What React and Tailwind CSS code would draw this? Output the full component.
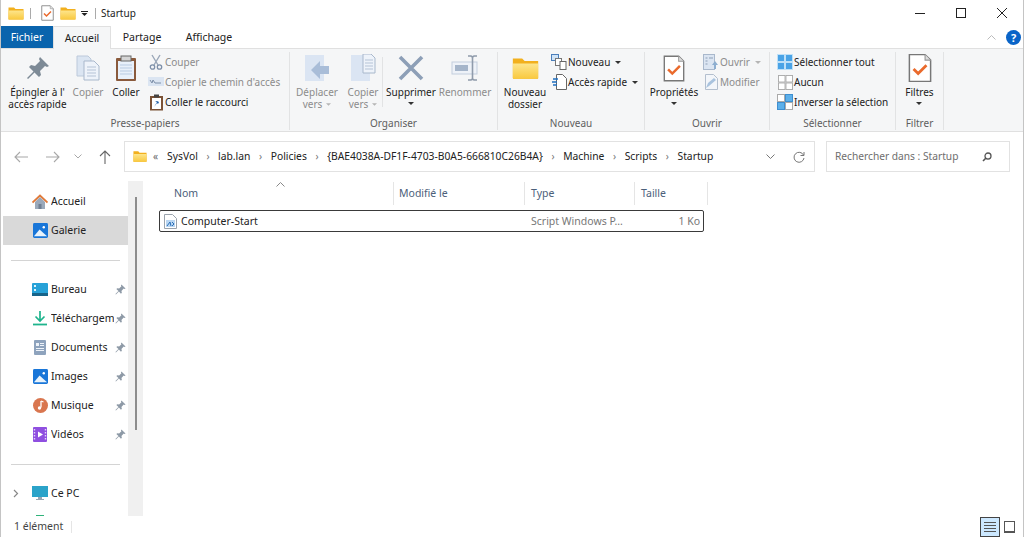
import React from 'react';

const Folder = ({ s = 16 }) => (
  <svg width={s} height={s * 0.875} viewBox="0 0 32 28">
    <defs>
      <linearGradient id="fg" x1="0" y1="0" x2="0" y2="1">
        <stop offset="0" stopColor="#fde58c" />
        <stop offset="1" stopColor="#f9c93f" />
      </linearGradient>
    </defs>
    <path d="M1 3h11l3 3h16v20a1 1 0 0 1-1 1H2a1 1 0 0 1-1-1z" fill="#f2b01e" />
    <path d="M1 9h30v17a1 1 0 0 1-1 1H2a1 1 0 0 1-1-1z" fill="url(#fg)" />
  </svg>
);

const CheckDoc = ({ w = 13, h = 16 }) => (
  <svg width={w} height={h} viewBox="0 0 26 32">
    <path d="M1.500 1.500h17l6 6v23h-23z" fill="#fff" stroke="#777" strokeWidth="1.600" />
    <path d="M18.500 1.500v6h6" fill="#ddd" stroke="#999" strokeWidth="1.200" />
    <path d="M6 17l5 5 9-9" fill="none" stroke="#ea6a2c" strokeWidth="3" />
  </svg>
);

const Pin = ({ s = 24, c = '#7d8a96' }) => (
  <svg width={s} height={s} viewBox="0 0 24 24">
    <path d="M14 1l9 9-2 1-2-1-5 5 1 4-2 2-4.500-4.500L2 23l-1-1 6.500-6.500L3 11l2-2 4 1 5-5-1-2z" fill={c} />
  </svg>
);

const CopyIcon = () => (
  <svg width="24" height="26" viewBox="0 0 24 26">
    <path d="M1 1h11l3 3v17H1z" fill="#dbe5f2" stroke="#bcc9da" />
    <path d="M8 6h10l5 5v14H8z" fill="#eef3fa" stroke="#a9b8cc" />
    <path d="M11 12h9M11 15h9M11 18h9M11 21h9" stroke="#b5c3d6" />
  </svg>
);

const Paste = () => (
  <svg width="22" height="27" viewBox="0 0 22 27">
    <rect x="1" y="3" width="20" height="23" rx="1" fill="#8a5a3c" />
    <rect x="3" y="6" width="16" height="18" fill="#e8f0fa" />
    <path d="M5 10h12M5 13h12M5 16h12M5 19h12" stroke="#b9cbe2" />
    <rect x="6" y="1" width="10" height="5" fill="#d5d5d5" stroke="#666" />
  </svg>
);

const MoveTo = ({ copy }) => (
  <svg width="26" height="28" viewBox="0 0 26 28">
    <rect x="1" y="1" width="19" height="26" fill="#dbe5f3" />
    {copy ? (
      <g>
        <path d="M13 0h8l4 4v15H13z" fill="#eef3fa" stroke="#a9b8cc" />
        <path d="M15 6h8M15 9h8M15 12h8M15 15h8" stroke="#b5c3d6" />
      </g>
    ) : (
      <path d="M25 12v8h-9v5l-9-9 9-9v5z" fill="#a9bdd8" />
    )}
  </svg>
);

const Delete = () => (
  <svg width="26" height="26" viewBox="0 0 26 26">
    <path d="M2 2l22 22M24 2L2 24" stroke="#8d9fb7" strokeWidth="3.600" />
  </svg>
);

const Rename = () => (
  <svg width="28" height="26" viewBox="0 0 28 26">
    <rect x="1" y="7" width="25" height="12" fill="#eef2f8" stroke="#c3cede" />
    <rect x="4" y="10" width="13" height="6" fill="#a5b5ca" />
    <path d="M17 1h3l1.500 1L23 1h3M21.500 2v22M17 25h3l1.500-1 1.500 1h3" fill="none" stroke="#8f9bab" strokeWidth="1.600" />
  </svg>
);

const NewItem = () => (
  <svg width="16" height="16" viewBox="0 0 16 16">
    <rect x="0.500" y="0.500" width="7" height="6" fill="#cfe3f6" stroke="#4a7ebb" />
    <rect x="4.500" y="4.500" width="6" height="7" fill="#fff" stroke="#777" />
    <rect x="9" y="7.500" width="6" height="8" fill="#fff" stroke="#666" />
  </svg>
);

const QuickAccess = () => (
  <svg width="15" height="16" viewBox="0 0 15 16">
    <path d="M4.500 0.500h6l4 4v11h-10z" fill="#fff" stroke="#666" />
    <path d="M1 5h5M0 8h5M1 11h4" stroke="#1f6fc0" strokeWidth="1.300" />
  </svg>
);

const Scissors = () => (
  <svg width="16" height="16" viewBox="0 0 16 16">
    <path d="M4 1l6 10M12 1L6 11" stroke="#9aa7b8" strokeWidth="1.400" />
    <circle cx="4.500" cy="13" r="2.200" fill="none" stroke="#7d8fa8" strokeWidth="1.300" />
    <circle cx="11.500" cy="13" r="2.200" fill="none" stroke="#7d8fa8" strokeWidth="1.300" />
  </svg>
);

const CopyPath = () => (
  <svg width="16" height="16" viewBox="0 0 16 16">
    <rect x="0" y="3" width="16" height="9" fill="#dbe5f2" />
    <path d="M2 6l2 3 1-3 2 3h6" fill="none" stroke="#7d8fa8" />
  </svg>
);

const PasteLink = () => (
  <svg width="15" height="17" viewBox="0 0 15 17">
    <rect x="1" y="2" width="13" height="14.500" fill="#7b5236" />
    <rect x="3" y="4" width="9" height="11" fill="#fff" />
    <rect x="5" y="0.500" width="5" height="3" fill="#444" />
    <path d="M5 13l3-5h-2l2-1 2 1-1 2-1-1z" fill="#1f5fa8" />
  </svg>
);

const OpenIcon = () => (
  <svg width="16" height="16" viewBox="0 0 16 16">
    <rect x="0.500" y="0.500" width="11" height="15" fill="#dbe5f2" stroke="#a9b8cc" />
    <path d="M2.500 4h2M2.500 7h2M2.500 10h2M6 4h4" stroke="#8d9fb7" />
    <path d="M12 7l3 4h-2v4h-2v-4H9z" fill="#8daed0" />
  </svg>
);

const EditIcon = () => (
  <svg width="16" height="16" viewBox="0 0 16 16">
    <path d="M2.500 0.500h8l4 4v11h-12z" fill="#f3f6fa" stroke="#b3bfce" />
    <path d="M3 14l2-5 6-5 2 2-7 6z" fill="#a9c3de" />
  </svg>
);

const Grid4 = ({ fills, stroke, s = 15 }) => (
  <svg width={s} height={s} viewBox="0 0 16 16">
    {[[0.500, 0.500], [8.500, 0.500], [0.500, 8.500], [8.500, 8.500]].map(([x, y], i) => (
      <rect key={i} x={x} y={y} width="7" height="7" fill={fills[i]} stroke={stroke[i]} />
    ))}
  </svg>
);

const Chev = ({ c = '#555', w = 6 }) => (
  <svg width={w} height={3} viewBox="0 0 6 3"><path d="M0 0h6L3 3z" fill={c} /></svg>
);

const BigBtn = ({ w, icon, lines, dis, arrow, arrowDis }) => (
  <div className={`flex flex-col items-center ${w}`}>
    <div className="flex h-[30px] items-center justify-center pt-[2px]">{icon}</div>
    <div className={`mt-[4px] flex flex-col items-center whitespace-nowrap text-[10px] leading-[12px] ${dis ? 'text-[#8c8c8c]' : 'text-[#222]'}`}>
      {lines.map((l, i) => (
        <span key={i} className="flex items-center gap-1">
          {l}
          {arrowDis && i === lines.length - 1 ? <Chev c="#b5b5b5" w={5} /> : null}
        </span>
      ))}
      {arrow ? <span className="mt-[4px] flex h-[8px] items-start"><Chev c="#333" /></span> : null}
    </div>
  </div>
);

const SmallBtn = ({ icon, label, dis, chev, chevDis, tw = 'w-4' }) => (
  <div className={`flex h-5 items-center gap-[1px] whitespace-nowrap text-[10px] ${dis ? 'text-[#8c8c8c]' : 'text-[#222]'}`}>
    <span className={`flex justify-center ${tw}`}>{icon}</span>
    <span>{label}</span>
    {chev ? <span className="ml-1"><Chev c="#333" /></span> : null}
    {chevDis ? <span className="ml-1"><Chev c="#b5b5b5" /></span> : null}
  </div>
);

const Group = ({ w, label, children }) => (
  <div className={`mb-[1px] mt-[3px] flex flex-col border-r border-[#e2e3e4] ${w}`}>
    <div className="flex h-[63px] flex-1 items-start">{children}</div>
    <div className="h-[14px] text-center text-[10px] leading-[14px] text-[#5e5e5e]">{label}</div>
  </div>
);

const Sep = () => <span className="text-[10px] text-[#777]">›</span>;

const Home = () => (
  <svg width="16" height="16" viewBox="0 0 16 16">
    <path d="M3 8v7h10V8L8 3z" fill="#9aa9bb" />
    <rect x="6.500" y="10" width="3" height="5" fill="#6f7f92" />
    <path d="M0.500 8.500L8 1.500l7.500 7" fill="none" stroke="#e07a3a" strokeWidth="1.800" />
  </svg>
);
const Gallery = ({ s = 15 }) => (
  <svg width={s} height={s} viewBox="0 0 16 16">
    <rect width="16" height="16" rx="1.500" fill="#1976d8" />
    <circle cx="11.500" cy="4.500" r="1.300" fill="#fff" />
    <path d="M1 14l6-7 8 7z" fill="#e8f3fc" />
  </svg>
);
const Desktop = () => (
  <svg width="16" height="13" viewBox="0 0 16 13">
    <rect width="16" height="12" rx="1" fill="#27a2d8" />
    <rect y="10" width="16" height="3" fill="#17648a" />
    <rect x="2" y="2" width="2" height="2" fill="#dff3fb" />
    <rect x="2" y="6" width="2" height="2" fill="#dff3fb" />
  </svg>
);
const Download = () => (
  <svg width="14" height="15" viewBox="0 0 14 15">
    <path d="M7 0v9M2.500 5.500L7 10l4.500-4.500" fill="none" stroke="#1fb48d" strokeWidth="1.700" />
    <path d="M0 13.500h14" stroke="#1fb48d" strokeWidth="1.800" />
  </svg>
);
const Docs = () => (
  <svg width="12" height="15" viewBox="0 0 12 15">
    <rect width="12" height="15" rx="1" fill="#8ea3bd" />
    <rect x="2" y="3" width="3" height="3" fill="#eef3f9" />
    <path d="M6 3.500h4M6 5.500h4M2 8.500h8M2 10.500h8" stroke="#eef3f9" />
  </svg>
);
const Music = () => (
  <svg width="15" height="15" viewBox="0 0 15 15">
    <circle cx="7.500" cy="7.500" r="7.500" fill="#d9764f" />
    <path d="M8 3v6.500" stroke="#fff" strokeWidth="1.300" />
    <circle cx="6.500" cy="10" r="1.700" fill="#fff" />
    <path d="M8 3l2.500 1" stroke="#fff" strokeWidth="1.300" />
  </svg>
);
const Video = () => (
  <svg width="14" height="15" viewBox="0 0 14 15">
    <rect width="14" height="15" rx="1" fill="#8f4fe0" />
    <path d="M5 4.500l5 3-5 3z" fill="#fff" />
    <path d="M1.500 2v11M12.500 2v11" stroke="#e4d3fa" strokeWidth="1.400" strokeDasharray="1.500 1.500" />
  </svg>
);
const Pc = () => (
  <svg width="16" height="16" viewBox="0 0 16 16">
    <rect width="16" height="11" fill="#2ba3c9" />
    <path d="M6 11h4v2h2v1H4v-1h2z" fill="#98a6b3" />
  </svg>
);
const Network = () => (
  <svg width="16" height="16" viewBox="0 0 16 16"><rect x="4" width="8" height="16" fill="#2fb37a" /></svg>
);
const ScriptFile = () => (
  <svg width="13" height="15" viewBox="0 0 13 15">
    <path d="M0.500 0.500h8l4 4v10h-12z" fill="#fff" stroke="#9aa3ad" />
    <rect x="2" y="6" width="9" height="7" fill="#b9d6f2" />
    <path d="M3 12l3-4 1 4M8 8l2 2-2 2" fill="none" stroke="#2a6fb8" />
  </svg>
);

const NavItem = ({ icon, label, pin, sel }) => (
  <div className={`flex h-[29px] shrink-0 items-center pl-[29px] text-[10.500px] text-[#222] ${sel ? 'bg-[#d9d9d9]' : ''}`}>
    <span className="flex w-4 justify-center">{icon}</span>
    <span className="ml-[3px] w-[63px] overflow-hidden whitespace-nowrap">{label}</span>
    {pin ? <span className="ml-[1px]"><Pin s={11} c="#8d99a6" /></span> : null}
  </div>
);

const Crumb = ({ children }) => <span className="whitespace-nowrap">{children}</span>;

export default function App() {
  return (
    <div className="flex h-[537px] w-[1024px] flex-col overflow-hidden border-l border-r border-[#c4c4c4] bg-white text-[#222]" style={{ fontFamily: '"Noto Sans", sans-serif' }}>
      {/* Title bar */}
      <div className="flex h-[26px] shrink-0 items-center pl-[7px]">
        <Folder />
        <span className="ml-[6px] h-[11px] w-px bg-[#aaa]" />
        <span className="ml-[10px]"><CheckDoc /></span>
        <span className="ml-[6px]"><Folder /></span>
        <span className="ml-[5px] flex flex-col items-center gap-[1px]">
          <span className="h-px w-[7px] bg-[#222]" />
          <Chev c="#222" w={7} />
        </span>
        <span className="ml-[7px] h-[11px] w-px bg-[#aaa]" />
        <span className="ml-[5px] text-[10px]">Startup</span>
        <div className="ml-auto flex items-center pr-[16px]">
          <span className="h-px w-[10px] bg-[#222]" />
          <span className="ml-[31px] h-[10px] w-[10px] border border-[#222]" />
          <svg className="ml-[31px]" width="10" height="10" viewBox="0 0 10 10">
            <path d="M0 0l10 10M10 0L0 10" stroke="#222" />
          </svg>
        </div>
      </div>

      {/* Tabs */}
      <div className="relative z-10 flex h-[22px] shrink-0 items-stretch text-[10.500px]">
        <div className="flex w-[52px] items-center justify-center bg-[#0a64ad] pt-px text-white">Fichier</div>
        <div className="-mb-px flex w-[58px] items-center justify-center border-l border-r border-t border-[#e0e0e0] bg-[#f5f6f7] pt-px">Accueil</div>
        <div className="flex w-[62px] items-center justify-center pt-px">Partage</div>
        <div className="flex w-[72px] items-center justify-center pt-px">Affichage</div>
        <div className="ml-auto flex items-center gap-[10px] pr-[2px]">
          <svg width="9" height="5" viewBox="0 0 9 5"><path d="M0.500 4.500l4-4 4 4" fill="none" stroke="#bbb" /></svg>
          <span className="flex h-[15px] w-[15px] items-center justify-center rounded-full bg-[#0a64c8] text-[11px] font-bold leading-none text-white">?</span>
        </div>
      </div>

      {/* Ribbon */}
      <div className="flex h-[84px] shrink-0 border-b border-t border-[#e0e0e0] bg-[#f5f6f7]">
        <Group w="w-[289px]" label="Presse-papiers">
          <div className="flex pl-[5px]">
            <BigBtn w="w-[63px]" icon={<Pin />} lines={["Épingler à l'", 'accès rapide']} />
            <BigBtn w="w-[38px]" dis icon={<CopyIcon />} lines={['Copier']} />
            <BigBtn w="w-[38px]" icon={<Paste />} lines={['Coller']} />
            <div className="ml-[3px] flex flex-col">
              <SmallBtn dis icon={<Scissors />} label="Couper" />
              <SmallBtn dis icon={<CopyPath />} label="Copier le chemin d'accès" />
              <SmallBtn icon={<PasteLink />} label="Coller le raccourci" />
            </div>
          </div>
        </Group>
        <Group w="w-[208px]" label="Organiser">
          <BigBtn w="w-[54px]" dis arrowDis icon={<MoveTo />} lines={['Déplacer', 'vers']} />
          <BigBtn w="w-[38px]" dis arrowDis icon={<MoveTo copy />} lines={['Copier', 'vers']} />
          <span className="mt-[5px] h-[50px] w-px bg-[#e2e3e4]" />
          <BigBtn w="w-[56px]" arrow icon={<Delete />} lines={['Supprimer']} />
          <BigBtn w="w-[52px]" dis icon={<Rename />} lines={['Renommer']} />
        </Group>
        <Group w="w-[147px]" label="Nouveau">
          <div className="flex pl-[3px]">
            <BigBtn w="w-[48px]" icon={<Folder s={27} />} lines={['Nouveau', 'dossier']} />
            <div className="ml-[2px] flex flex-col">
              <SmallBtn icon={<NewItem />} label="Nouveau" chev />
              <SmallBtn icon={<QuickAccess />} label="Accès rapide" chev />
            </div>
          </div>
        </Group>
        <Group w="w-[125px]" label="Ouvrir">
          <div className="flex pl-[4px]">
            <BigBtn w="w-[50px]" arrow icon={<CheckDoc w={22} h={27} />} lines={['Propriétés']} />
            <div className="ml-[4px] flex flex-col">
              <SmallBtn dis icon={<OpenIcon />} label="Ouvrir" chevDis />
              <SmallBtn dis icon={<EditIcon />} label="Modifier" />
            </div>
          </div>
        </Group>
        <Group w="w-[126px]" label="Sélectionner">
          <div className="flex flex-col pl-[7px]">
            <SmallBtn icon={<Grid4 s={16} fills={['#4aa3e6', '#4aa3e6', '#4aa3e6', '#4aa3e6']} stroke={['#bfe0f7', '#bfe0f7', '#bfe0f7', '#bfe0f7']} />} label="Sélectionner tout" />
            <SmallBtn icon={<Grid4 s={15} fills={['#fff', '#fff', '#fff', '#fff']} stroke={['#aaa', '#aaa', '#aaa', '#aaa']} />} label="Aucun" />
            <SmallBtn icon={<Grid4 s={16} fills={['#fff', '#5db0ea', '#5db0ea', '#fff']} stroke={['#aaa', '#3f8fd0', '#3f8fd0', '#aaa']} />} label="Inverser la sélection" />
          </div>
        </Group>
        <Group w="w-[48px]" label="Filtrer">
          <BigBtn w="w-[47px]" arrow icon={<CheckDoc w={24} h={30} />} lines={['Filtres']} />
        </Group>
      </div>

      {/* Address row */}
      <div className="flex h-[49px] shrink-0 items-center pl-[13px]">
        <svg width="14" height="12" viewBox="0 0 14 12"><path d="M6 1L1 6l5 5M1 6h13" fill="none" stroke="#a8a8a8" strokeWidth="1.100" /></svg>
        <svg className="ml-[18px]" width="14" height="12" viewBox="0 0 14 12"><path d="M8 1l5 5-5 5M13 6H0" fill="none" stroke="#a8a8a8" strokeWidth="1.100" /></svg>
        <svg className="ml-[14px]" width="8" height="5" viewBox="0 0 8 5"><path d="M0.500 0.500L4 4l3.500-3.500" fill="none" stroke="#a8a8a8" /></svg>
        <svg className="ml-[17px]" width="12" height="14" viewBox="0 0 12 14"><path d="M1 6l5-5 5 5M6 1v13" fill="none" stroke="#666" strokeWidth="1.100" /></svg>
        <div className="ml-[13px] flex h-[31px] w-[691px] items-center border border-[#e2e2e2] pl-2 pr-[9px] text-[10.300px]">
          <Folder s={14} />
          <span className="ml-[6px] text-[10px] text-[#666]">«</span>
          <div className="ml-[9px] flex items-center gap-[8.600px]">
            <Crumb>SysVol</Crumb><Sep />
            <Crumb>lab.lan</Crumb><Sep />
            <Crumb>Policies</Crumb><Sep />
            <Crumb>{'{BAE4038A-DF1F-4703-B0A5-666810C26B4A}'}</Crumb><Sep />
            <Crumb>Machine</Crumb><Sep />
            <Crumb>Scripts</Crumb><Sep />
            <Crumb>Startup</Crumb>
          </div>
          <svg className="ml-auto" width="9" height="5" viewBox="0 0 9 5"><path d="M0.500 0.500l4 4 4-4" fill="none" stroke="#777" /></svg>
          <svg className="ml-[18px]" width="12" height="12" viewBox="0 0 12 12"><path d="M10.500 4A5 5 0 1 0 11 7M11 1v3.500H7.500" fill="none" stroke="#777" /></svg>
        </div>
        <div className="ml-[11px] flex h-[31px] w-[184px] items-center justify-between border border-[#e2e2e2] pl-2 pr-[17px] text-[10.200px] text-[#6e6e6e]">
          <span>Rechercher dans : Startup</span>
          <svg width="10" height="10" viewBox="0 0 10 10"><circle cx="6" cy="4" r="3" fill="none" stroke="#555" strokeWidth="1.300" /><path d="M4 6L1 9" stroke="#555" strokeWidth="1.600" /></svg>
        </div>
      </div>

      {/* Body */}
      <div className="flex min-h-0 flex-1">
        <div className="flex w-[127px] shrink-0 flex-col overflow-hidden pl-[2px] pt-[6px]">
          <NavItem icon={<Home />} label="Accueil" />
          <NavItem icon={<Gallery />} label="Galerie" sel />
          <div className="mx-2 mb-[14px] mt-[15px] h-px shrink-0 bg-[#d4d4d4]" />
          <NavItem icon={<Desktop />} label="Bureau" pin />
          <NavItem icon={<Download />} label="Téléchargements" pin />
          <NavItem icon={<Docs />} label="Documents" pin />
          <NavItem icon={<Gallery />} label="Images" pin />
          <NavItem icon={<Music />} label="Musique" pin />
          <NavItem icon={<Video />} label="Vidéos" pin />
          <div className="mx-2 mb-[14px] mt-[15px] h-px shrink-0 bg-[#d4d4d4]" />
          <div className="relative shrink-0">
            <svg className="absolute left-[10px] top-[10px]" width="6" height="9" viewBox="0 0 6 9"><path d="M1 1l3.500 3.500L1 8" fill="none" stroke="#888" strokeWidth="1.200" /></svg>
            <NavItem icon={<Pc />} label="Ce PC" />
          </div>
          <NavItem icon={<Network />} label="" />
        </div>
        <div className="flex w-[15px] shrink-0 justify-center bg-[#f0f0f0] pt-[16px]">
          <span className="h-[233px] w-[2px] bg-[#8c8c8c]" />
        </div>
        <div className="min-w-0 flex-1 pl-[16px]">
          <div className="relative flex h-[29px] items-start pt-px text-[10.500px] text-[#4c607a]">
            <svg className="absolute left-[117px] top-[1px]" width="9" height="5" viewBox="0 0 9 5"><path d="M0.500 4.500l4-4 4 4" fill="none" stroke="#888" /></svg>
            <div className="flex h-[23px] w-[235px] items-center border-r border-[#e5e5e5] pl-[15px]">Nom</div>
            <div className="flex h-[23px] w-[131px] items-center border-r border-[#e5e5e5] pl-[5px]">Modifié le</div>
            <div className="flex h-[23px] w-[110px] items-center border-r border-[#e5e5e5] pl-[6px]">Type</div>
            <div className="flex h-[23px] w-[73px] items-center border-r border-[#e5e5e5] pl-[6px]">Taille</div>
          </div>
          <div className="flex h-[22px] w-[545px] items-center rounded-[2px] border border-[#3a3a3a] pt-px text-[10.500px]">
            <span className="ml-[4px] flex w-[13px]"><ScriptFile /></span>
            <span className="ml-[4px] w-[350px]">Computer-Start</span>
            <span className="w-[102px] whitespace-nowrap text-[#777]">Script Windows P...</span>
            <span className="w-[67px] text-right text-[#777]">1 Ko</span>
          </div>
        </div>
      </div>

      {/* Status bar */}
      <div className="flex h-[21px] shrink-0 items-center pl-[13px] text-[10.500px] text-[#444]">
        <span>1 élément</span>
        <span className="ml-[8px] h-[12px] w-px bg-[#e5e5e5]" />
        <div className="ml-auto flex items-center pr-[8px]">
          <span className="flex h-[20px] w-[20px] flex-col items-center justify-center gap-[2px] border border-[#444] bg-[#cce8ff]">
            <span className="h-px w-[12px] bg-[#555]" />
            <span className="h-px w-[12px] bg-[#555]" />
            <span className="h-px w-[12px] bg-[#555]" />
            <span className="h-px w-[12px] bg-[#555]" />
          </span>
          <span className="ml-[4px] h-[12px] w-[11px] border border-b-2 border-[#555]" />
        </div>
      </div>
    </div>
  );
}
